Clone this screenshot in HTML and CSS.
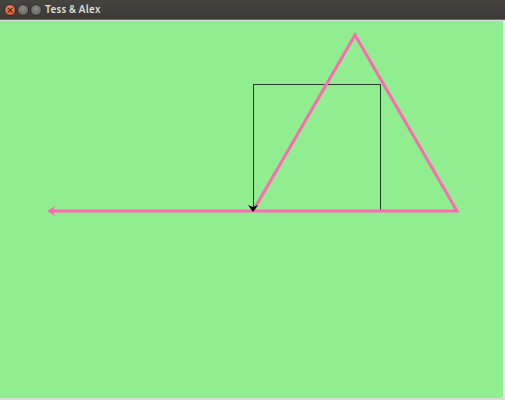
FILE: index.html
```html
<!DOCTYPE html>
<html>
<head>
<meta charset="utf-8">
<link rel="stylesheet" href="styles.css">
</head>
<body>
<div class="window">
  <div class="titlebar">
    <div class="buttons">
      <span class="btn close">×</span>
      <span class="btn min"></span>
      <span class="btn max"></span>
    </div>
    <span class="title">Tess &amp; Alex</span>
  </div>
  <div class="canvas">
    <svg width="503" height="377" viewBox="0 21 503 377" xmlns="http://www.w3.org/2000/svg">
      <rect x="253.5" y="84.5" width="127" height="127" fill="none" stroke="#2a3a2a" stroke-width="1"/>
      <polyline points="253,211 355,35 457,211 52,211" fill="none" stroke="#ff69b4" stroke-width="3" stroke-linejoin="miter"/>
      <polygon points="47,211 55,206 53,211 55,216" fill="#ff69b4"/>
      <polygon points="253,212 248,205 253,207 258,205" fill="#000"/>
    </svg>
  </div>
</div>
</body>
</html>
```
FILE: styles.css
```css
html, body {
  margin: 0;
  padding: 0;
  background: #d6ddd6;
  width: 505px;
  height: 400px;
  overflow: hidden;
}
.window {
  display: flex;
  flex-direction: column;
  width: 505px;
}
.titlebar {
  height: 19px;
  background: linear-gradient(#45443f, #3b3a36);
  border-bottom: 1px solid #6c6b66;
  display: flex;
  align-items: center;
  box-sizing: content-box;
}
.buttons {
  display: flex;
  gap: 1px;
  margin-left: 4px;
}
.btn {
  width: 10px;
  height: 10px;
  border-radius: 50%;
  background: radial-gradient(circle at 50% 40%, #8a8984, #5c5b57);
  border: 1px solid #2e2d2a;
  font-size: 9px;
  line-height: 10px;
  text-align: center;
  color: #3a2010;
  font-family: "DejaVu Sans", sans-serif;
  font-weight: bold;
}
.btn.close {
  background: radial-gradient(circle at 50% 40%, #f7885a, #d9501e);
}
.title {
  margin-left: 3px;
  font-family: "Ubuntu", "DejaVu Sans", sans-serif;
  font-weight: bold;
  font-size: 10px;
  color: #dfdbd2;
  letter-spacing: 0.2px;
}
.canvas {
  margin-top: 1px;
  width: 503px;
  height: 377px;
  background: #90ee90;
  border-right: 2px solid #e8f0e8;
}
.canvas svg {
  display: block;
}
```
